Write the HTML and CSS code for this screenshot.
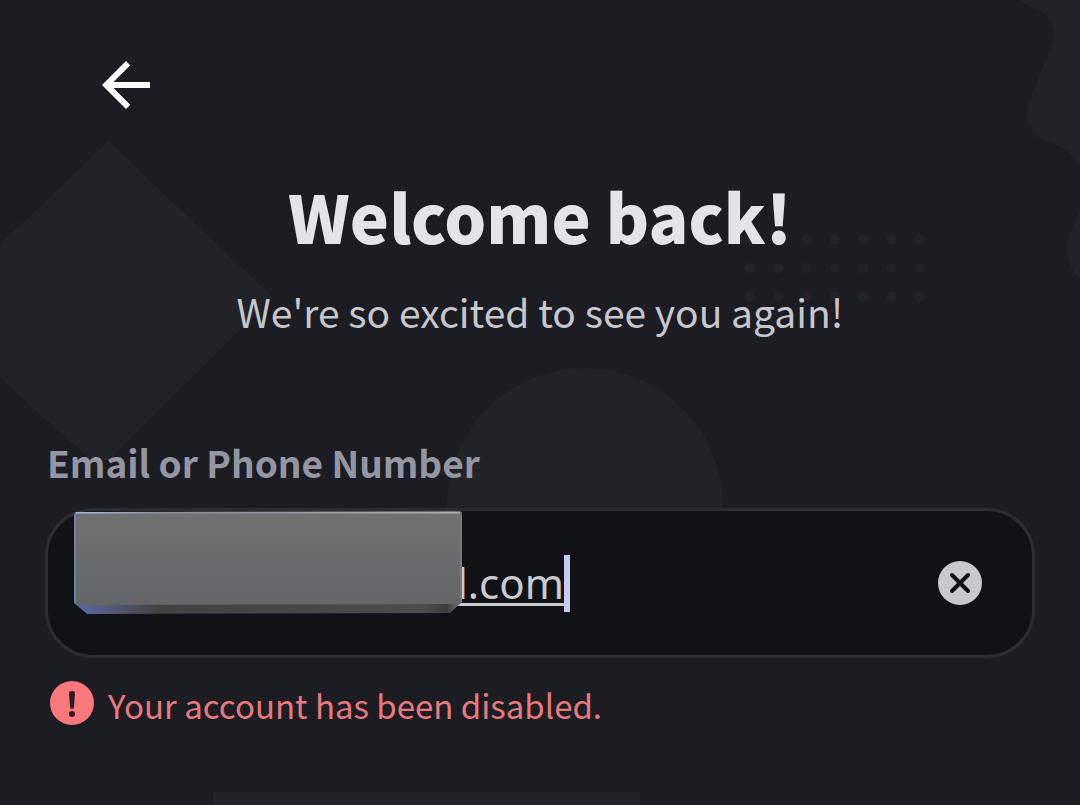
FILE: index.html
```html
<!DOCTYPE html>
<html lang="en">
<head>
<meta charset="utf-8">
<meta name="viewport" content="width=device-width, initial-scale=1">
<title>Welcome back!</title>
<link rel="stylesheet" href="styles.css">
</head>
<body>
<div class="screen">
  <svg class="backdrop" viewBox="0 0 1080 805" preserveAspectRatio="xMidYMin slice" aria-hidden="true">
    <defs>
      <pattern id="dots" x="736" y="225" width="28.3" height="28.7" patternUnits="userSpaceOnUse">
        <circle cx="14.1" cy="14.3" r="5"/>
      </pattern>
    </defs>
    <path d="M109 141 273 298 109 460 93 462 0 378V244Z"/>
    <circle cx="585" cy="506" r="138"/>
    <path d="M1020 0C1027 9 1040 7 1048 18C1054 26 1055 37 1051 48L1031 97C1022 118 1030 137 1050 143C1064 147 1074 154 1080 167V0Z"/>
    <path d="M1080 210 1070 235C1063 252 1069 269 1080 278Z"/>
    <rect x="736" y="225" width="198" height="86" fill="url(#dots)"/>
    <rect x="213" y="792" width="427" height="13"/>
  </svg>

  <header class="topbar">
    <button class="back" type="button" aria-label="Back">
      <svg viewBox="0 0 24 24" aria-hidden="true"><path d="M20 11H7.830l5.590-5.590L12 4l-8 8 8 8 1.410-1.410L7.830 13H20z"/></svg>
    </button>
  </header>

  <main>
    <h1 class="title">Welcome back!</h1>
    <p class="subtitle">We're so excited to see you again!</p>

    <form class="login">
      <label class="label" for="login">Email or Phone Number</label>
      <div class="field">
        <input class="input" id="login" type="text" value="l.com" aria-invalid="true" aria-describedby="login-error">
        <span class="caret"></span>
        <button class="clear" type="button" aria-label="Clear">
          <svg viewBox="0 0 44 44" aria-hidden="true"><circle cx="22" cy="22" r="22"/><path d="M14 14 30 30M30 14 14 30"/></svg>
        </button>
        <svg class="slab" viewBox="0 0 388 103" aria-hidden="true">
          <defs>
            <linearGradient id="face" x1="0" y1="0" x2="0" y2="1"><stop offset="0" stop-color="#717172"/><stop offset="1" stop-color="#656667"/></linearGradient>
            <linearGradient id="edge"><stop offset="0" stop-color="#5968b0"/><stop offset=".09" stop-color="#555b78"/><stop offset=".22" stop-color="#424242"/><stop offset=".9" stop-color="#4c4c4c"/><stop offset=".96" stop-color="#3c3c3c"/><stop offset="1" stop-color="#777"/></linearGradient>
            <linearGradient id="rim"><stop offset="0" stop-color="#a9b8ed"/><stop offset=".25" stop-color="#8b8d96"/><stop offset="1" stop-color="#b0b0b0"/></linearGradient>
          </defs>
          <path d="M0 92 13 103 376 102 388 91Z" fill="url(#edge)"/>
          <path d="M0 4Q0 1 3 1L385 0Q388 0 388 3V91L386 93 2 94 0 92Z" fill="url(#face)"/>
          <path d="M2 1H386V2.500H2Z" fill="url(#rim)"/>
          <path d="M1 3V92" stroke="#7886bd" stroke-width="1.500"/>
          <path d="M387 3V91" stroke="#858585" stroke-width="1"/>
        </svg>
      </div>
      <p class="error" id="login-error" role="alert">
        <svg class="error-icon" viewBox="0 0 44 44" aria-hidden="true"><circle cx="22" cy="22" r="22"/><path d="M19 12Q19 10 22 10T25 12L24 26Q24 28 22 28T20 26Z"/><circle class="error-dot" cx="22" cy="33" r="3"/></svg>
        <span class="error-text">Your account has been disabled.</span>
      </p>
    </form>
  </main>
</div>
</body>
</html>
```
FILE: styles.css
```css
* {
  box-sizing: border-box;
}

body {
  margin: 0;
  background: #1c1d22;
  color: #c6c7cc;
  font-family: "Noto Sans CJK SC", "Noto Sans", sans-serif;
}

.screen {
  position: relative;
  min-height: 100vh;
  padding: 49px 45px 0;
  overflow: hidden;
}

.backdrop {
  position: absolute;
  inset: 0;
  width: 100%;
  height: 100%;
  fill: #222328;
}

.topbar,
main {
  position: relative;
}

.topbar {
  display: flex;
  padding-left: 45px;
}

button {
  padding: 0;
  border: 0;
  background: none;
}

button svg {
  display: block;
  width: 100%;
  height: 100%;
}

.back {
  width: 72px;
  height: 72px;
  fill: #fff;
}

.title {
  margin: 46px 0 0;
  color: #e3e4e8;
  font-size: 66px;
  font-weight: 900;
  line-height: 96px;
  text-align: center;
}

.subtitle {
  margin: 20px 0 0;
  font-size: 39px;
  line-height: 56px;
  text-align: center;
}

.login {
  display: flex;
  flex-direction: column;
  margin-top: 95px;
}

.label {
  padding-left: 2px;
  color: #9596a3;
  font-size: 37px;
  font-weight: 700;
  line-height: 56px;
}

.field {
  position: relative;
  display: flex;
  align-items: center;
  height: 150px;
  margin-top: 18px;
  padding: 0 50px 0 409px;
  border: 3px solid #2c2d33;
  border-radius: 48px;
  background: #111216;
}

.input {
  field-sizing: content;
  padding: 0;
  border: 0;
  outline: 0;
  background: none;
  color: #c9cacf;
  font-family: "Noto Sans", sans-serif;
  font-size: 42px;
  line-height: 56px;
  text-decoration: underline 3px;
  text-underline-offset: 4px;
}

.caret {
  width: 6px;
  height: 57px;
  background: #c6cbf4;
}

.clear {
  width: 44px;
  height: 44px;
  margin-left: auto;
  fill: #c8c9ce;
}

.clear path {
  stroke: #111216;
  stroke-width: 4;
  stroke-linecap: round;
}

.slab {
  position: absolute;
  top: 0;
  left: 26px;
  width: 388px;
  height: 103px;
}

.error {
  display: flex;
  align-items: center;
  gap: 14px;
  margin: 18px 0 0;
  padding-left: 5px;
  color: #e9797e;
  font-size: 33px;
  line-height: 50px;
}

.error-text {
  padding-top: 4px;
}

.error-icon {
  width: 44px;
  height: 44px;
  fill: #fb787c;
}

.error-icon path,
.error-dot {
  fill: #2b1c22;
}
```
